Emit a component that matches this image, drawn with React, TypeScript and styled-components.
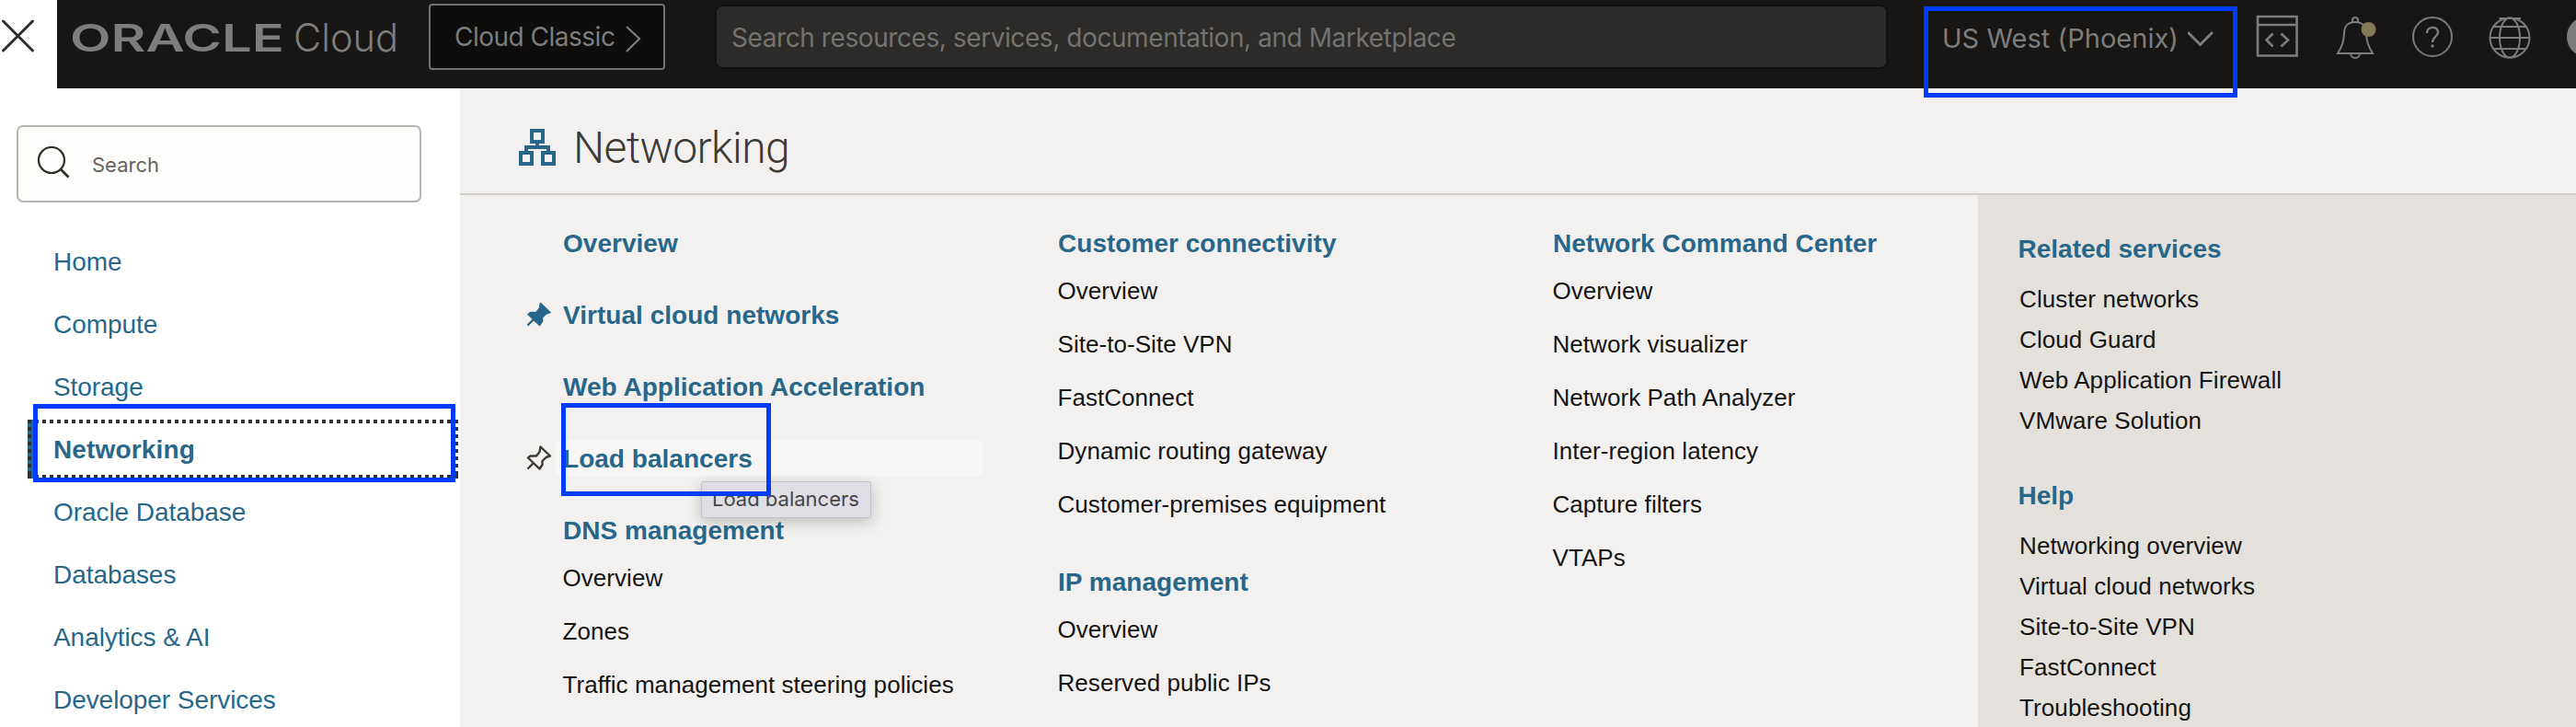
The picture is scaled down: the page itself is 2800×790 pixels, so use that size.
import React from 'react';
import styled, { createGlobalStyle, css } from 'styled-components';

const Global = createGlobalStyle`
  * { box-sizing: border-box; }
  body { margin: 0; background: #f3f1ef; font-family: "Liberation Sans", Arial, sans-serif; }
`;

const ui = `Inter, "Noto Sans", sans-serif`;
const teal = '#28678a';
const grey = '#7d7d7d';
const ink = '#33302b';

const Page = styled.div`
  position: relative;
  width: 2800px;
  height: 790px;
  overflow: hidden;
  display: flex;
  flex-direction: column;
`;

const TopBar = styled.header`
  display: flex;
  height: 96px;
  flex: none;
  background: #171614;
  color: ${grey};
  font-family: ${ui};
`;

const CloseButton = styled.div`
  width: 62px;
  background: #fff;
  padding: 20px 0 0 1px;
`;

const Brand = styled.div`
  width: 404px;
  padding: 16px 0 0 14px;
`;

const ClassicButton = styled.div`
  display: flex;
  width: 257px;
  height: 72px;
  margin-top: 4px;
  padding: 0 0 0 26px;
  gap: 10px;
  border: 2px solid #737270;
  border-radius: 4px;
  background: #0e0d0b;
`;

const BarText = styled.span<{ $width: number; $spacing?: number; $top?: number; $size?: number }>`
  display: block;
  flex: none;
  width: ${p => p.$width}px;
  padding-top: ${p => p.$top ?? 0}px;
  font-size: ${p => p.$size ?? 28}px;
  line-height: 34px;
  letter-spacing: ${p => p.$spacing ?? 0}px;
  white-space: nowrap;
`;

const GlobalSearch = styled.div`
  width: 1271px;
  height: 66px;
  margin: 7px 0 0 56px;
  padding-left: 16px;
  border-radius: 6px;
  background: #2c2b29;
  color: #747370;
  box-shadow: 0 0 3px 1px #0e0d0c;
`;

const Region = styled.div`
  display: flex;
  width: 341px;
  margin-left: 41px;
  padding-left: 20px;
  gap: 11px;
`;

const BarIcons = styled.div`
  display: flex;
  padding: 12px 0 0 17px;
`;

const Body = styled.div`
  display: flex;
  flex: 1;
  min-height: 0;
`;

const Sidebar = styled.aside`
  width: 500px;
  flex: none;
  padding-top: 40px;
  background: #fff;
`;

const SideSearch = styled.div`
  display: flex;
  width: 440px;
  height: 84px;
  margin-left: 18px;
  padding: 21px 0 0 20px;
  gap: 22px;
  border: 2px solid #b9b4af;
  border-radius: 7px;
  background: #fdfdfb;
  font-family: ${ui};
  font-size: 22px;
  line-height: 26px;
  color: #66625e;
`;

const SideSearchText = styled.span`
  padding-top: 7px;
`;

const NavList = styled.nav`
  margin: 32px 0 0 30px;
`;

const NavItem = styled.div<{ $active?: boolean }>`
  display: flex;
  align-items: center;
  width: 468px;
  height: 64px;
  margin-bottom: 4px;
  padding: 2px 0 0 28px;
  font-size: 28px;
  letter-spacing: -0.06px;
  color: ${teal};
  ${p => p.$active && css`
    font-weight: 700;
    letter-spacing: 0.15px;
    background:
      repeating-linear-gradient(90deg, ${ink} 0 4px, transparent 4px 8px) 0 0 / 100% 4px no-repeat,
      repeating-linear-gradient(90deg, ${ink} 0 4px, transparent 4px 8px) 0 100% / 100% 4px no-repeat,
      repeating-linear-gradient(180deg, ${ink} 0 4px, transparent 4px 8px) 0 0 / 4px 100% no-repeat,
      repeating-linear-gradient(180deg, ${ink} 0 4px, transparent 4px 8px) 100% 0 / 4px 100% no-repeat,
      linear-gradient(90deg, ${teal} 8px, #fff 8px);
  `}
`;

const Main = styled.main`
  display: flex;
  flex-direction: column;
  flex: 1;
  background: #f3f1ef;
`;

const TitleBar = styled.div`
  display: flex;
  height: 116px;
  flex: none;
  padding: 44px 0 0 64px;
  gap: 19px;
  border-bottom: 2px solid #d1cfc7;
`;

const Title = styled.h1`
  margin: -9px 0 0;
  font-family: Roboto, "Liberation Sans", sans-serif;
  font-size: 48px;
  line-height: 60px;
  font-weight: 300;
  letter-spacing: -0.6px;
  color: #3d3b38;
`;

const Content = styled.div`
  display: flex;
  flex: 1;
  min-height: 0;
`;

const Columns = styled.div`
  display: flex;
  flex: none;
  width: 1650px;
  padding: 30px 0 0 72px;
`;

const Column = styled.div`
  flex: none;
  width: 538px;

  &:last-child {
    width: 502px;
  }
`;

const Group = styled.section`
  margin-bottom: 34px;
`;

const HeadingRow = styled.div`
  display: flex;
  align-items: center;
  height: 44px;
`;

const PinSlot = styled.span`
  display: flex;
  flex: none;
  width: 32px;
`;

const Heading = styled.h2<{ $hover?: boolean }>`
  margin: 0;
  padding: 0 8px;
  width: 464px;
  height: 40px;
  line-height: 42px;
  font-size: 28px;
  font-weight: 700;
  letter-spacing: 0.03px;
  border-radius: 6px;
  color: ${teal};
  white-space: nowrap;
  background: ${p => (p.$hover ? '#f7f6f5' : 'transparent')};
`;

const Item = styled.div`
  padding-left: 39.5px;
  height: 58px;
  line-height: 60px;
  font-size: 26px;
  letter-spacing: 0.05px;
  color: #161513;
  white-space: nowrap;
`;

const Related = styled.aside`
  flex: 1;
  padding: 37px 0 0 43.5px;
  background: #e4e1dc;
`;

const RelatedGroup = styled.section`
  margin-bottom: 38px;
`;

const RelatedHeading = styled.h2`
  margin: 0 0 10px;
  height: 44px;
  line-height: 44px;
  font-size: 28px;
  color: ${teal};
`;

const RelatedItem = styled.div`
  height: 44px;
  padding-left: 1.5px;
  line-height: 44px;
  font-size: 26px;
  letter-spacing: 0.1px;
  color: #161513;
`;

const Tooltip = styled.div`
  position: absolute;
  left: 762px;
  top: 523px;
  width: 185px;
  height: 40px;
  border: 1px solid #c4c3c8;
  border-radius: 2px;
  background: #dfdee5;
  box-shadow: 0 4px 16px rgba(0, 0, 0, 0.22);
  padding-left: 11px;
  font-family: ${ui};
  font-size: 22px;
  line-height: 37px;
  color: #474648;
  white-space: nowrap;
`;

const Highlight = styled.div<{ $x: number; $y: number; $w: number; $h: number }>`
  position: absolute;
  left: ${p => p.$x}px;
  top: ${p => p.$y}px;
  width: ${p => p.$w}px;
  height: ${p => p.$h}px;
  border: 5px solid #003cff;
`;

const PIN = 'M15.5 1.5 L26 11.500 L21.500 13 L17.500 17 L17.500 21 L14.500 25.500 L2 13.500 L4.500 11.500 L11 11.500 L14.500 7 Z';

const Pin = ({ filled }: { filled?: boolean }) => (
  <svg width="28" height="28" viewBox="0 0 28 28" fill={filled ? teal : 'none'} stroke={filled ? teal : '#3d3b38'} strokeWidth={filled ? 1.6 : 2.4} strokeLinejoin="round">
    <path d={PIN} />
    <path d="M8 19 L1.5 25.500" strokeWidth="2.4" />
  </svg>
);

const nav = ['Home', 'Compute', 'Storage', 'Networking', 'Oracle Database', 'Databases', 'Analytics & AI', 'Developer Services'];

type Section = { title: string; items?: string[]; pin?: 'filled' | 'outline' };

const columns: Section[][] = [
  [
    { title: 'Overview' },
    { title: 'Virtual cloud networks', pin: 'filled' },
    { title: 'Web Application Acceleration' },
    { title: 'Load balancers', pin: 'outline' },
    { title: 'DNS management', items: ['Overview', 'Zones', 'Traffic management steering policies'] },
  ],
  [
    { title: 'Customer connectivity', items: ['Overview', 'Site-to-Site VPN', 'FastConnect', 'Dynamic routing gateway', 'Customer-premises equipment'] },
    { title: 'IP management', items: ['Overview', 'Reserved public IPs'] },
  ],
  [
    { title: 'Network Command Center', items: ['Overview', 'Network visualizer', 'Network Path Analyzer', 'Inter-region latency', 'Capture filters', 'VTAPs'] },
  ],
];

const related: Section[] = [
  { title: 'Related services', items: ['Cluster networks', 'Cloud Guard', 'Web Application Firewall', 'VMware Solution'] },
  { title: 'Help', items: ['Networking overview', 'Virtual cloud networks', 'Site-to-Site VPN', 'FastConnect', 'Troubleshooting'] },
];

export default function App() {
  return (
    <Page>
      <Global />
      <TopBar>
        <CloseButton>
          <svg width="38" height="38" fill="none" stroke="#312d2a" strokeWidth="3" strokeLinecap="round">
            <path d="M2.5 3 L34.500 35 M34.500 3 L2.5 35" />
          </svg>
        </CloseButton>
        <Brand>
          <svg width="370" height="52" fill={grey}>
            <text x="0" y="40" fontFamily={ui} fontSize="41" fontWeight="600" textLength="233" lengthAdjust="spacingAndGlyphs">ORACLE</text>
            <text x="243" y="40" fontFamily={ui} fontSize="42.5" fontWeight="300" textLength="114" lengthAdjust="spacingAndGlyphs">Cloud</text>
          </svg>
        </Brand>
        <ClassicButton>
          <BarText $width={176} $top={17} $spacing={-0.5}>Cloud Classic</BarText>
          <svg width="20" height="70" fill="none" stroke={grey} strokeWidth="2.2">
            <path d="M1 23 L15 36 L1 50" />
          </svg>
        </ClassicButton>
        <GlobalSearch>
          <BarText $width={800} $top={17} $spacing={-0.42}>Search resources, services, documentation, and Marketplace</BarText>
        </GlobalSearch>
        <Region>
          <BarText $width={256} $top={25} $size={29} $spacing={0.03}>US West (Phoenix)</BarText>
          <svg width="32" height="60" fill="none" stroke={grey} strokeWidth="3">
            <path d="M0 35 L13.500 48.500 L27 35" />
          </svg>
        </Region>
        <BarIcons>
          <svg width="351" height="60" fill="none" stroke={grey} strokeWidth="2">
            <path d="M5 6 H47.500 V48.500 H5 Z M5 15 H47.500" strokeWidth="2.6" />
            <path d="M21.500 24.500 L14.500 31.500 L21.500 38.500 M30.500 24.500 L38 31.500 L30.500 38.500" strokeWidth="2.6" />
            <path d="M92 46 H130 C125.500 39 123 33 123 24 C123 16 118 12 111 12 C104 12 99 16 99 24 C99 33 96.500 39 92 46 Z" />
            <path d="M108 12 V10 A3 3 0 0 1 114 10 V12 M106 46 A5 5 0 0 0 116 46" />
            <circle cx="125.500" cy="20" r="8" fill="#857855" stroke="none" />
            <circle cx="195" cy="28" r="21" />
            <path d="M189 24 C189 16 201 16 201 23 C201 28 195 28 195 34" strokeWidth="2.4" />
            <circle cx="195" cy="38" r="1.700" fill={grey} stroke="none" />
            <circle cx="279" cy="29" r="21.500" />
            <ellipse cx="279" cy="29" rx="11" ry="21.500" />
            <path d="M267.500 8 H291 M258 29 H300 M262 17 H296 M262 41 H296" />
            <circle cx="363" cy="28" r="22" fill={grey} stroke="none" />
          </svg>
        </BarIcons>
      </TopBar>
      <Body>
        <Sidebar>
          <SideSearch>
            <svg width="38" height="38" fill="none" stroke="#312d2a" strokeWidth="2.2">
              <circle cx="16" cy="15" r="14" />
              <path d="M26 25 L34.500 33.500" strokeWidth="2.8" />
            </svg>
            <SideSearchText>Search</SideSearchText>
          </SideSearch>
          <NavList>
            {nav.map(label => (
              <NavItem key={label} $active={label === 'Networking'}>{label}</NavItem>
            ))}
          </NavList>
        </Sidebar>
        <Main>
          <TitleBar>
            <svg width="40" height="40" fill="none" stroke={teal} strokeWidth="4">
              <path d="M14 2 H26 V14 H14 Z M2 26 H14 V38 H2 Z M26 26 H38 V38 H26 Z M20 15 V20 M8 26 V20 H32 V26" />
            </svg>
            <Title>Networking</Title>
          </TitleBar>
          <Content>
            <Columns>
              {columns.map((sections, i) => (
                <Column key={i}>
                  {sections.map(s => (
                    <Group key={s.title}>
                      <HeadingRow>
                        <PinSlot>{s.pin && <Pin filled={s.pin === 'filled'} />}</PinSlot>
                        <Heading $hover={s.pin === 'outline'}>{s.title}</Heading>
                      </HeadingRow>
                      {s.items?.map(item => <Item key={item}>{item}</Item>)}
                    </Group>
                  ))}
                </Column>
              ))}
            </Columns>
            <Related>
              {related.map(s => (
                <RelatedGroup key={s.title}>
                  <RelatedHeading>{s.title}</RelatedHeading>
                  {s.items?.map(item => <RelatedItem key={item}>{item}</RelatedItem>)}
                </RelatedGroup>
              ))}
            </Related>
          </Content>
        </Main>
      </Body>
      <Tooltip>Load balancers</Tooltip>
      <Highlight $x={2091} $y={7} $w={341} $h={99} />
      <Highlight $x={36} $y={439} $w={459} $h={85} />
      <Highlight $x={610} $y={438} $w={228} $h={101} />
    </Page>
  );
}
